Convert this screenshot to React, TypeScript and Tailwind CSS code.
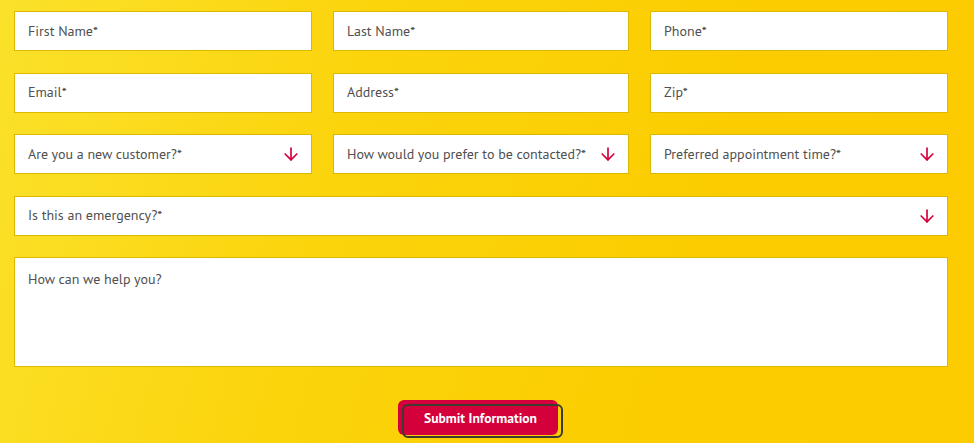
import { type ReactElement } from 'react';
import { ArrowDown } from 'lucide-react';

const FONT = 'font-["PT_Sans","Liberation_Sans",Arial,sans-serif]';

function TextField({ label }: { label: string }): ReactElement {
  return (
    <div className="flex h-10 items-center border border-[#dcb900] bg-white px-[13px] text-[14px] text-[#505050]">
      {label}
    </div>
  );
}

function SelectField({ label }: { label: string }): ReactElement {
  return (
    <div className="flex h-10 items-center justify-between border border-[#dcb900] bg-white pl-[13px] pr-[10px] text-[14px] text-[#505050]">
      <span>{label}</span>
      <ArrowDown className="h-[20px] w-[20px] text-[#d4003b]" strokeWidth={2} />
    </div>
  );
}

export default function App(): ReactElement {
  return (
    <div
      className={`${FONT} h-[443px] w-[974px] overflow-hidden bg-[linear-gradient(105deg,#fbe12b_0%,#fbd40c_35%,#fbcd00_70%,#fccb00_100%)] pl-[14px] pt-[11px]`}
    >
      <div className="grid w-[934px] grid-cols-[298px_296px_298px] gap-x-[21px] gap-y-[21.5px]">
        <TextField label="First Name*" />
        <TextField label="Last Name*" />
        <TextField label="Phone*" />
        <TextField label="Email*" />
        <TextField label="Address*" />
        <TextField label="Zip*" />
        <SelectField label="Are you a new customer?*" />
        <SelectField label="How would you prefer to be contacted?*" />
        <SelectField label="Preferred appointment time?*" />
        <div className="col-span-3">
          <SelectField label="Is this an emergency?*" />
        </div>
        <div className="col-span-3 h-[110px] border border-[#dcb900] bg-white px-[13px] pt-[11px] text-[14px] text-[#505050]">
          How can we help you?
        </div>
      </div>
      <div className="mt-[33px] flex w-[934px] justify-center pr-[6px]">
        <button
          type="button"
          className="relative h-[35px] w-[160px] rounded-[6px] bg-[#d4003b] pl-[5px] pt-[2px] text-[13.6px] font-bold text-white"
        >
          <span className="pointer-events-none absolute left-[4px] top-[4px] h-[34px] w-[161px] rounded-[6px] border-2 border-[#3d3a33]" />
          <span className="relative">Submit Information</span>
        </button>
      </div>
    </div>
  );
}
